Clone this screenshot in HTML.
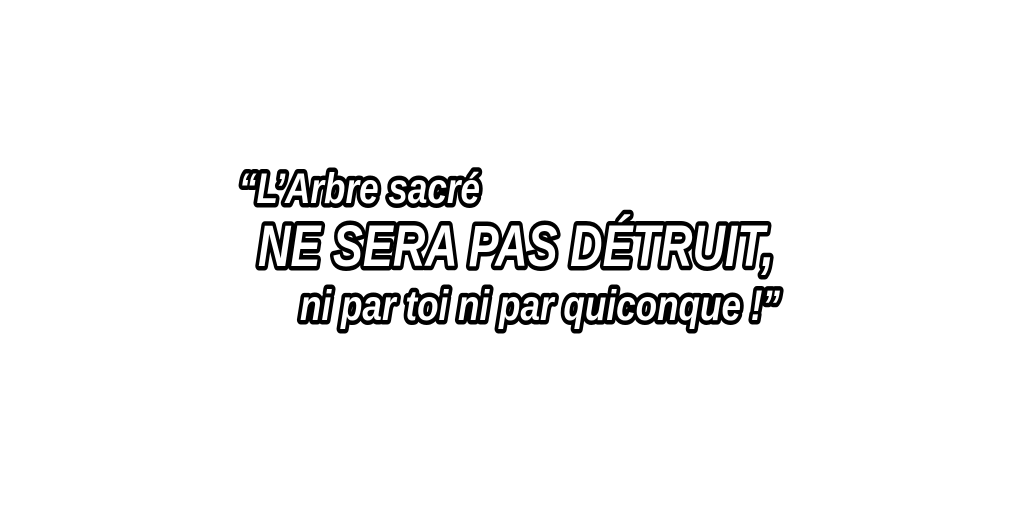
<!DOCTYPE html>
<html><head><style>html,body{margin:0;padding:0;background:#fff;width:1024px;height:512px;overflow:hidden}</style></head>
<body>
<svg width="1024" height="512" viewBox="0 0 1024 512" xmlns="http://www.w3.org/2000/svg">
<g font-family="'Liberation Sans', sans-serif" font-weight="bold" font-style="italic" fill="#fff" stroke="#000" stroke-width="9" stroke-linejoin="round" paint-order="stroke">
<text x="239" y="203" font-size="43" textLength="241" lengthAdjust="spacingAndGlyphs">“L’Arbre sacré</text>
<text x="258" y="266" font-size="58" textLength="516" lengthAdjust="spacingAndGlyphs">NE SERA PAS DÉTRUIT,</text>
<text x="300" y="320" font-size="43" textLength="480" lengthAdjust="spacingAndGlyphs">ni par toi ni par quiconque !”</text>
</g>
</svg>
</body></html>
